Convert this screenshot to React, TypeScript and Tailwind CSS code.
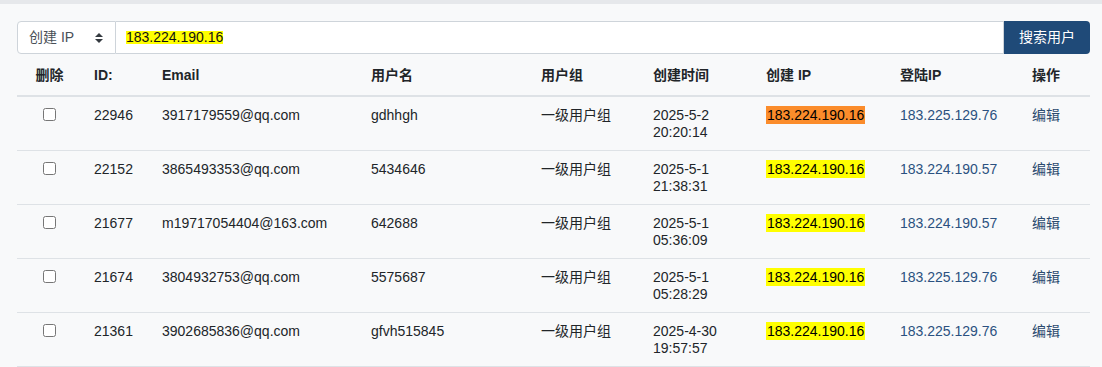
const rows = [
  { id: '22946', email: '3917179559@qq.com', name: 'gdhhgh', group: '一级用户组', date: '2025-5-2', time: '20:20:14', ip: '183.224.190.16', login: '183.225.129.76', current: true },
  { id: '22152', email: '3865493353@qq.com', name: '5434646', group: '一级用户组', date: '2025-5-1', time: '21:38:31', ip: '183.224.190.16', login: '183.224.190.57', current: false },
  { id: '21677', email: 'm19717054404@163.com', name: '642688', group: '一级用户组', date: '2025-5-1', time: '05:36:09', ip: '183.224.190.16', login: '183.224.190.57', current: false },
  { id: '21674', email: '3804932753@qq.com', name: '5575687', group: '一级用户组', date: '2025-5-1', time: '05:28:29', ip: '183.224.190.16', login: '183.225.129.76', current: false },
  { id: '21361', email: '3902685836@qq.com', name: 'gfvh515845', group: '一级用户组', date: '2025-4-30', time: '19:57:57', ip: '183.224.190.16', login: '183.225.129.76', current: false },
];

const headers = ['ID:', 'Email', '用户名', '用户组', '创建时间', '创建 IP', '登陆IP', '操作'];
const widths = ['w-[65px]', 'w-[68px]', 'w-[209px]', 'w-[170px]', 'w-[112px]', 'w-[113px]', 'w-[134px]', 'w-[132px]', 'w-[70px]'];

export default function App() {
  return (
    <div className="min-h-[367px] bg-[#f8f9fa] text-[#212529] text-[14px] font-['Liberation_Sans','Noto_Sans_CJK_SC',sans-serif]">
      <div className="h-[4px] bg-[#e6e8eb]"></div>

      <div className="ml-[17px] w-[1073px] pt-[17px]">
        {/* Search bar */}
        <div className="flex h-[33px]">
          <div className="w-[99px] flex items-center justify-between pl-[11px] pr-[12px] bg-white border border-[#ced4da] rounded-l-[4px] text-[#495057]">
            <span>创建 IP</span>
            <svg width="8" height="10" viewBox="0 0 4 5" className="mt-[1px]">
              <path d="M2 0L0 2h4zm0 5L0 3h4z" fill="#343a40" />
            </svg>
          </div>
          <div className="flex-1 flex items-center pl-[10px] bg-white border border-l-0 border-[#ced4da] text-[14px] text-[#111]">
            <span className="bg-[#ffff00] leading-[13px]">183.224.190.16</span>
          </div>
          <button className="w-[86px] bg-[#1f4a78] text-white rounded-r-[4px] text-[14px]">搜索用户</button>
        </div>

        {/* Table */}
        <table className="table-fixed w-[1073px] border-collapse">
          <colgroup>
            {widths.map((w, i) => (
              <col key={i} className={w} />
            ))}
          </colgroup>
          <thead>
            <tr className="border-b-2 border-[#dee2e6]">
              <th className="pt-[13px] pb-[11px] leading-[17px] font-bold text-center">删除</th>
              {headers.map(h => (
                <th key={h} className="pt-[13px] pb-[11px] px-[12px] leading-[17px] font-bold text-left">{h}</th>
              ))}
            </tr>
          </thead>
          <tbody>
            {rows.map(r => (
              <tr key={r.id} className="border-b border-[#dee2e6] align-top leading-[17px]">
                <td className="pt-[10px] pb-[9px] text-center">
                  <input type="checkbox" className="w-[13px] h-[13px] mt-[1px] align-top" />
                </td>
                <td className="pt-[10px] pb-[9px] px-[12px]">{r.id}</td>
                <td className="pt-[10px] pb-[9px] px-[12px] whitespace-nowrap">{r.email}</td>
                <td className="pt-[10px] pb-[9px] px-[12px]">{r.name}</td>
                <td className="pt-[10px] pb-[9px] px-[12px]">{r.group}</td>
                <td className="pt-[10px] pb-[9px] px-[12px]">
                  <div>{r.date}</div>
                  <div>{r.time}</div>
                </td>
                <td className="pt-[10px] pb-[9px] px-[12px] whitespace-nowrap">
                  <span className={`text-black px-[1px] py-[1px] ${r.current ? 'bg-[#fb8c2b]' : 'bg-[#ffff00]'}`}>{r.ip}</span>
                </td>
                <td className="pt-[10px] pb-[9px] px-[12px] whitespace-nowrap">
                  <a className="text-[#2b5180]">{r.login}</a>
                </td>
                <td className="pt-[10px] pb-[9px] px-[12px]">
                  <a className="text-[#2b4a6e]">编辑</a>
                </td>
              </tr>
            ))}
          </tbody>
        </table>
      </div>
    </div>
  );
}
